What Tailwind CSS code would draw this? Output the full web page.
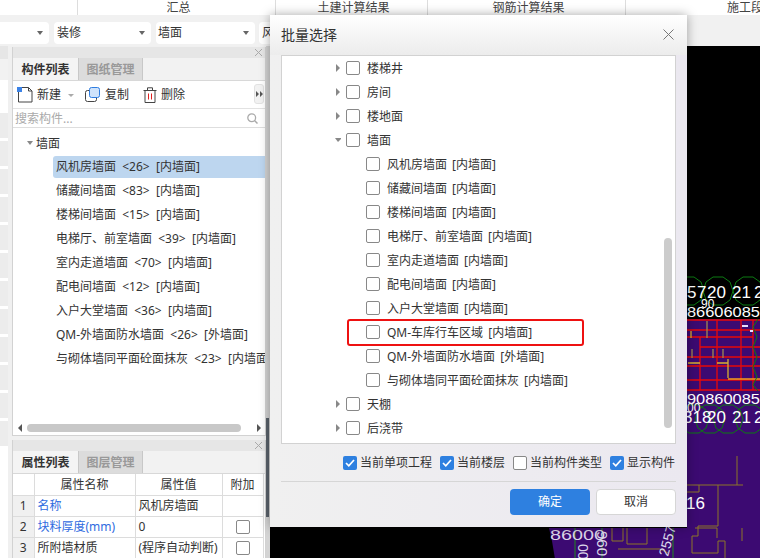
<!DOCTYPE html>
<html lang="zh-CN">
<head>
  <meta charset="UTF-8" />
  <title>批量选择</title>
  <script src="https://cdn.jsdelivr.net/npm/@tailwindcss/browser@4"></script>
</head>
<body class="bg-[#f0f0f0]">
<div class="relative w-[760px] h-[558px] overflow-hidden flex flex-col bg-[#f0f0f0] text-[#333] text-[12px] font-['Noto_Sans','Noto_Sans_CJK_SC',sans-serif]">

  <!-- top column heads -->
  <div class="h-[15px] flex bg-white shrink-0 leading-[16px] text-[#444] overflow-hidden">
    <div class="w-[78px] shrink-0 border-r border-[#ddd]"></div>
    <div class="w-[198px] shrink-0 border-r border-[#ddd] text-center pl-[4px]">汇总</div>
    <div class="w-[152px] shrink-0 border-r border-[#ddd] text-center pl-[4px]">土建计算结果</div>
    <div class="w-[198px] shrink-0 border-r border-[#ddd] text-center pl-[4px]">钢筋计算结果</div>
    <div class="pl-[101px] whitespace-nowrap">施工段</div>
  </div>

  <!-- combo row -->
  <div class="h-[31px] shrink-0 flex items-center gap-[4px] bg-[#f1f1f1] pt-[4px] -ml-[60px]">
    <div class="w-[109px] h-[22px] bg-white rounded-[4px] flex items-center justify-end pr-[6px] mr-[1px]"><span class="border-x-[3px] border-t-[4px] border-x-transparent border-t-[#666]"></span></div>
    <div class="w-[97px] h-[22px] bg-white rounded-[4px] flex items-center justify-between pl-[3px] pr-[4px] mr-[1px] text-[#333]">装修<span class="mr-[2px] border-x-[3px] border-t-[4px] border-x-transparent border-t-[#666]"></span></div>
    <div class="w-[99px] h-[22px] bg-white rounded-[4px] flex items-center justify-between pl-[2px] pr-[4px] text-[#333]">墙面<span class="mr-[2px] border-x-[3px] border-t-[4px] border-x-transparent border-t-[#666]"></span></div>
    <div class="w-[60px] h-[22px] bg-white rounded-[4px] flex items-center px-[3px] text-[#333]">风</div>
  </div>

  <div class="flex flex-1 min-h-0">
    <!-- cut-off panel on the far left -->
    <div class="w-[8px] shrink-0 flex flex-col bg-white overflow-hidden">
      <div class="h-[13px] bg-[#e6e6e6] shrink-0"></div>
      <div class="h-[21px] bg-[#f2f2f2] shrink-0"></div>
      <div class="h-[33px] shrink-0"></div>
      <div class="h-[25px] bg-[#ececec] mb-[3px] shrink-0"></div>
      <div class="h-[25px] bg-[#ececec] mb-[3px] shrink-0"></div>
      <div class="h-[25px] bg-[#ececec] mb-[3px] shrink-0"></div>
      <div class="h-[25px] bg-[#ececec] mb-[3px] shrink-0"></div>
      <div class="h-[25px] bg-[#ececec] mb-[3px] shrink-0"></div>
      <div class="h-[25px] bg-[#ececec] mb-[3px] shrink-0"></div>
      <div class="h-[25px] bg-[#ececec] mb-[3px] shrink-0"></div>
      <div class="h-[25px] bg-[#ececec] mb-[3px] shrink-0"></div>
      <div class="h-[25px] bg-[#ececec] mb-[3px] shrink-0"></div>
      <div class="h-[25px] bg-[#ececec] mb-[3px] shrink-0"></div>
      <div class="h-[25px] bg-[#ececec] mb-[3px] shrink-0"></div>
      <div class="h-[25px] bg-[#ececec] shrink-0"></div>
      <div class="h-[115px] bg-white shrink-0"></div>
      <div class="flex-1 bg-[#d3e5fa]"></div>
    </div>

    <!-- panels -->
    <div class="w-[254px] ml-[4px] shrink-0 flex flex-col">
      <!-- component list -->
      <div class="h-[389px] mt-[1px] shrink-0 flex flex-col border border-[#d2d2d2] border-t-0 bg-white">
        <div class="h-[11px] shrink-0 bg-[#e6e6e6] flex items-center justify-end pr-[3px] text-[#aaa]">
          <svg width="7" height="7" viewBox="0 0 7 7"><path d="M0 0L7 7M7 0L0 7" stroke="#aaa" fill="none"/></svg>
        </div>
        <div class="h-[23px] shrink-0 flex bg-[#f2f2f2] border-b border-[#d8d8d8]">
          <div class="w-[65px] pt-[2px] font-bold text-[#333] flex items-center justify-center bg-[#f4f4f4]">构件列表</div>
          <div class="w-[65px] pt-[2px] text-[#999] font-bold flex items-center justify-center bg-[#dcdcdc] border-x border-[#c8c8c8]">图纸管理</div>
        </div>
        <div class="h-[28px] shrink-0 flex items-center border-b border-[#e2e2e2] pl-[4px] pt-[1px] relative">
          <svg width="16" height="16" viewBox="0 0 16 16" class="mr-[4px]"><path d="M1.5 3.5V15H15V4L11.5 .5H5" fill="none" stroke="#444"/><path d="M11.5 .5V4H15" fill="none" stroke="#444"/><rect x="0" y="0" width="5" height="5" fill="#3b82e6"/></svg>
          <span>新建</span>
          <span class="ml-[7px] border-x-[3px] border-t-[3px] border-x-transparent border-t-[#aaa]"></span>
          <svg width="16" height="16" viewBox="0 0 16 16" class="ml-[11px] mr-[4px]"><rect x=".5" y="3.5" width="11" height="11" rx="2" fill="#fff" stroke="#444"/><rect x="4.5" y=".5" width="10" height="10" rx="2" fill="#cfe3fb" stroke="#2f7de0"/></svg>
          <span>复制</span>
          <svg width="14" height="16" viewBox="0 0 14 16" class="ml-[14px] mr-[4px]"><path d="M.5 3.5H13.5M4.5 3V.8H9.5V3M2 3.5V15.5H12V3.5" fill="none" stroke="#444"/><path d="M5.5 6.5V12.5M8.5 6.5V12.5" stroke="#e02020" fill="none"/></svg>
          <span>删除</span>
          <div class="absolute right-[1px] top-[3px] w-[10px] h-[20px] bg-[#f2f2f2] rounded-[3px] border border-[#e2e2e2] flex items-center justify-center">
            <svg width="7" height="6" viewBox="0 0 7 6"><path d="M0 0L3 3L0 6ZM4 0L7 3L4 6Z" fill="#555"/></svg>
          </div>
        </div>
        <div class="h-[19px] shrink-0 flex items-center justify-between border-b border-[#dedede] pl-[2px] pr-[7px] pt-[1px] text-[#aaa]">
          <span>搜索构件...</span>
          <svg width="11" height="11" viewBox="0 0 11 11"><circle cx="4.7" cy="4.7" r="3.9" fill="none" stroke="#aaa" stroke-width="1.3"/><path d="M7.5 7.5L10.5 10.5" stroke="#aaa" stroke-width="1.5"/></svg>
        </div>
        <div class="flex-1 min-h-0 pt-[3px] overflow-hidden whitespace-nowrap">
          <div class="h-[24px] flex items-center pl-[14px]"><span class="mr-[3px] border-x-[3px] border-t-[4px] border-x-transparent border-t-[#888]"></span><span class="pt-[2px]">墙面</span></div>
          <div class="h-[22px] my-px ml-[40px] pl-[3px] flex items-center bg-[#bdd6ef] rounded-l-[3px]">风机房墙面&nbsp;&nbsp;&lt;26&gt;&nbsp;&nbsp;[内墙面]</div>
          <div class="h-[24px] ml-[40px] pl-[3px] flex items-center">储藏间墙面&nbsp;&nbsp;&lt;83&gt;&nbsp;&nbsp;[内墙面]</div>
          <div class="h-[24px] ml-[40px] pl-[3px] flex items-center">楼梯间墙面&nbsp;&nbsp;&lt;15&gt;&nbsp;&nbsp;[内墙面]</div>
          <div class="h-[24px] ml-[40px] pl-[3px] flex items-center">电梯厅、前室墙面&nbsp;&nbsp;&lt;39&gt;&nbsp;&nbsp;[内墙面]</div>
          <div class="h-[24px] ml-[40px] pl-[3px] flex items-center">室内走道墙面&nbsp;&nbsp;&lt;70&gt;&nbsp;&nbsp;[内墙面]</div>
          <div class="h-[24px] ml-[40px] pl-[3px] flex items-center">配电间墙面&nbsp;&nbsp;&lt;12&gt;&nbsp;&nbsp;[内墙面]</div>
          <div class="h-[24px] ml-[40px] pl-[3px] flex items-center">入户大堂墙面&nbsp;&nbsp;&lt;36&gt;&nbsp;&nbsp;[内墙面]</div>
          <div class="h-[24px] ml-[40px] pl-[3px] flex items-center">QM-外墙面防水墙面&nbsp;&nbsp;&lt;26&gt;&nbsp;&nbsp;[外墙面]</div>
          <div class="h-[24px] ml-[40px] pl-[3px] flex items-center overflow-hidden">与砌体墙同平面砼面抹灰&nbsp;&nbsp;&lt;23&gt;&nbsp;&nbsp;[内墙面]</div>
        </div>
        <div class="h-[14px] shrink-0 flex items-center pl-[5px] pr-[4px] gap-[5px]">
          <svg width="4" height="8" viewBox="0 0 4 8"><path d="M4 0V8L0 4Z" fill="#555"/></svg>
          <div class="flex-1 h-[8px] bg-[#c8c8c8] rounded-full mr-[11px]"></div>
          <svg width="4" height="8" viewBox="0 0 4 8"><path d="M0 0V8L4 4Z" fill="#555"/></svg>
        </div>
      </div>

      <!-- property list -->
      <div class="flex-1 mt-[4px] min-h-0 flex flex-col border-x border-[#d2d2d2] bg-white overflow-hidden">
        <div class="h-[11px] shrink-0 bg-[#e6e6e6] flex items-center justify-end pr-[3px]">
          <svg width="7" height="7" viewBox="0 0 7 7"><path d="M0 0L7 7M7 0L0 7" stroke="#aaa" fill="none"/></svg>
        </div>
        <div class="h-[23px] shrink-0 flex bg-[#f2f2f2] border-b border-[#d8d8d8]">
          <div class="w-[65px] pt-[2px] font-bold flex items-center justify-center bg-[#f4f4f4]">属性列表</div>
          <div class="w-[65px] pt-[2px] text-[#999] font-bold flex items-center justify-center bg-[#dcdcdc] border-x border-[#c8c8c8]">图层管理</div>
        </div>
        <table class="w-[250px] table-fixed border-collapse">
          <colgroup><col class="w-[21px]"><col class="w-[101px]"><col class="w-[87px]"><col class="w-[41px]"></colgroup>
          <tr class="h-[21px]">
            <td class="border border-[#dcdcdc] border-l-0 border-t-0"></td>
            <td class="border border-[#dcdcdc] border-t-0 pt-[2px] text-center">属性名称</td>
            <td class="border border-[#dcdcdc] border-t-0 pt-[2px] text-center">属性值</td>
            <td class="border border-[#dcdcdc] border-t-0 pt-[2px] text-center">附加</td>
          </tr>
          <tr class="h-[21px]">
            <td class="border border-[#dcdcdc] border-l-0 bg-[#f0f0f0] text-center">1</td>
            <td class="border border-[#dcdcdc] pl-[3px] text-[#2f6be0]">名称</td>
            <td class="border border-[#dcdcdc] pl-[3px]">风机房墙面</td>
            <td class="border border-[#dcdcdc]"></td>
          </tr>
          <tr class="h-[21px]">
            <td class="border border-[#dcdcdc] border-l-0 bg-[#f0f0f0] text-center">2</td>
            <td class="border border-[#dcdcdc] pl-[3px] text-[#2f6be0]">块料厚度(mm)</td>
            <td class="border border-[#dcdcdc] pl-[3px]">0</td>
            <td class="border border-[#dcdcdc]"><div class="w-[14px] h-[14px] mx-auto bg-white border border-[#888] rounded-[2px]"></div></td>
          </tr>
          <tr class="h-[21px]">
            <td class="border border-[#dcdcdc] border-l-0 bg-[#f0f0f0] text-center">3</td>
            <td class="border border-[#dcdcdc] pl-[3px]">所附墙材质</td>
            <td class="border border-[#dcdcdc] pl-[3px] whitespace-nowrap overflow-hidden">(程序自动判断)</td>
            <td class="border border-[#dcdcdc]"><div class="w-[14px] h-[14px] mx-auto bg-white border border-[#888] rounded-[2px]"></div></td>
          </tr>
        </table>
      </div>
    </div>

    <!-- splitter -->
    <div class="w-[4px] shrink-0 flex flex-col bg-[#d4d4d4]">
      <div class="h-[372px] shrink-0"></div>
      <div class="h-[99px] w-[3px] shrink-0 bg-[#5a626b]"></div>
    </div>

    <!-- drawing canvas -->
    <svg class="flex-1 block bg-black" width="490" height="513" viewBox="270 45 490 513" font-family="Liberation Sans, sans-serif">
      <defs>
        <polygon id="axis" points="15,0 12,-9 5,-14 -5,-14 -12,-9 -15,0 -12,9 -5,14 5,14 12,9" fill="none" stroke="#0c7a12"/>
      </defs>
      <!-- purple floor -->
      <path d="M687 318H760V558H555L552 540L549 527H687Z" fill="#3c0a72"/>
      <!-- axis markers -->
      <use href="#axis" x="689" y="290"/><use href="#axis" x="718" y="290"/><use href="#axis" x="748" y="290"/>
      <use href="#axis" x="694" y="418"/><use href="#axis" x="710" y="418"/><use href="#axis" x="728" y="418"/><use href="#axis" x="750" y="418"/>
      <!-- red grid -->
      <g stroke="#e80808" fill="none" stroke-width="1.3">
        <path d="M687 319H760M687 329H760M687 336H753M700 346H760M687 356H760M687 365H760M687 379H760M687 389H760"/>
        <path d="M700 336V389M717 319V389M741 319V389M753 319V389"/>
      </g>
      <g stroke="#d8b030" fill="none" stroke-width="1.3">
        <path d="M691 330V337M688 362H700M717 362H728M728 358V377"/>
      </g>
      <path d="M707 320V337M692 348V357M713 348V357M723 348V357" stroke="#a08850" stroke-width="1.3" fill="none"/>
      <path d="M728 378H760" stroke="#f0a020" stroke-width="1.5" fill="none"/>
      <path d="M742 325H748M750 330H753" stroke="#e8e0ff" stroke-width="2"/>
      <path d="M758 318L753 326L757 336L753 346L757 356L753 366L757 376L753 384L758 390" fill="none" stroke="#0c7a12"/>
      <!-- dimension text -->
      <g fill="#fff" font-size="17">
        <text y="297"><tspan x="687">5</tspan><tspan x="697">7</tspan><tspan x="707">20</tspan><tspan x="732">21</tspan><tspan x="754">2</tspan></text>
        <text y="422"><tspan x="683">318</tspan><tspan x="707">20</tspan><tspan x="732">21</tspan><tspan x="754">2</tspan></text>
        <text x="686" y="508">16</text>
      </g>
      <g fill="#fff" font-size="15">
        <text x="687" y="316" textLength="73" lengthAdjust="spacingAndGlyphs">86606085</text>
        <text x="701" y="307" font-size="12">90</text>
        <text x="687" y="403" textLength="73" lengthAdjust="spacingAndGlyphs">90860085</text>
        <text x="687" y="411" font-size="12">00</text>
      </g>
      <!-- floor plan outlines -->
      <g stroke="#8c7428" fill="none">
        <path d="M687 484H737V455M699 484V491H687M718 484V525H698V535H692V552H718V540H725V558"/>
        <path d="M737 484H743M742 527V540"/>
        <path d="M612 527V540H623V527M627 527V543H647V527M618 548H660L668 552M695 527H717V537"/>
      </g>
      <path d="M575 527V558M602 527V558M673 527V558" stroke="#1f8a1f"/>
      <g fill="#ddd6ea" font-size="14">
        <text x="550" y="539" font-size="15" textLength="55" lengthAdjust="spacingAndGlyphs">86000</text>
        <text transform="translate(578 543) rotate(90)">00</text>
        <text transform="translate(597 530) rotate(90)" font-size="15">960</text>
        <text transform="translate(668 556) rotate(-75)">2557</text>
      </g>
    </svg>
  </div>

  <!-- modal dialog -->
  <div class="absolute left-[270px] top-[15px] w-[417px] h-[512px] flex flex-col bg-gradient-to-r from-[#f0f0f0] to-[#ebe8f0] shadow-[0_0_10px_rgba(0,0,0,0.35)]">
    <div class="h-[40px] shrink-0 flex items-center justify-between pl-[11px] pr-[13px] pb-[1px] bg-gradient-to-b from-white to-[#ececec] text-[14px] text-[#333]">
      <span>批量选择</span>
      <svg width="11" height="11" viewBox="0 0 11 11"><path d="M.5 .5L10.5 10.5M10.5 .5L.5 10.5" stroke="#777" fill="none"/></svg>
    </div>
    <div class="relative h-[389px] mx-[11px] shrink-0 bg-white border border-[#d2d2d2] overflow-hidden whitespace-nowrap [word-spacing:2px]">
      <div class="h-[24px] flex items-center pl-[53px]"><svg width="6" height="8" viewBox="0 0 6 8" class="mr-[5px]"><path d="M1 0L5 4L1 8Z" fill="#888"/></svg><span class="w-[14px] h-[14px] bg-white border border-[#888] rounded-[2px] mr-[7px]"></span><span class="pt-[2px]">楼梯井</span></div>
      <div class="h-[24px] flex items-center pl-[53px]"><svg width="6" height="8" viewBox="0 0 6 8" class="mr-[5px]"><path d="M1 0L5 4L1 8Z" fill="#888"/></svg><span class="w-[14px] h-[14px] bg-white border border-[#888] rounded-[2px] mr-[7px]"></span><span class="pt-[2px]">房间</span></div>
      <div class="h-[24px] flex items-center pl-[53px]"><svg width="6" height="8" viewBox="0 0 6 8" class="mr-[5px]"><path d="M1 0L5 4L1 8Z" fill="#888"/></svg><span class="w-[14px] h-[14px] bg-white border border-[#888] rounded-[2px] mr-[7px]"></span><span class="pt-[2px]">楼地面</span></div>
      <div class="h-[24px] flex items-center pl-[53px]"><svg width="6" height="8" viewBox="0 0 6 8" class="mr-[5px]"><path d="M0 2H7L3 6Z" fill="#888"/></svg><span class="w-[14px] h-[14px] bg-white border border-[#888] rounded-[2px] mr-[7px]"></span><span class="pt-[2px]">墙面</span></div>
      <div class="h-[24px] flex items-center pl-[84px]"><span class="w-[14px] h-[14px] bg-white border border-[#888] rounded-[2px] mr-[7px]"></span><span class="pt-[2px]">风机房墙面 [内墙面]</span></div>
      <div class="h-[24px] flex items-center pl-[84px]"><span class="w-[14px] h-[14px] bg-white border border-[#888] rounded-[2px] mr-[7px]"></span><span class="pt-[2px]">储藏间墙面 [内墙面]</span></div>
      <div class="h-[24px] flex items-center pl-[84px]"><span class="w-[14px] h-[14px] bg-white border border-[#888] rounded-[2px] mr-[7px]"></span><span class="pt-[2px]">楼梯间墙面 [内墙面]</span></div>
      <div class="h-[24px] flex items-center pl-[84px]"><span class="w-[14px] h-[14px] bg-white border border-[#888] rounded-[2px] mr-[7px]"></span><span class="pt-[2px]">电梯厅、前室墙面 [内墙面]</span></div>
      <div class="h-[24px] flex items-center pl-[84px]"><span class="w-[14px] h-[14px] bg-white border border-[#888] rounded-[2px] mr-[7px]"></span><span class="pt-[2px]">室内走道墙面 [内墙面]</span></div>
      <div class="h-[24px] flex items-center pl-[84px]"><span class="w-[14px] h-[14px] bg-white border border-[#888] rounded-[2px] mr-[7px]"></span><span class="pt-[2px]">配电间墙面 [内墙面]</span></div>
      <div class="h-[24px] flex items-center pl-[84px]"><span class="w-[14px] h-[14px] bg-white border border-[#888] rounded-[2px] mr-[7px]"></span><span class="pt-[2px]">入户大堂墙面 [内墙面]</span></div>
      <div class="h-[24px] flex items-center pl-[84px]"><span class="w-[14px] h-[14px] bg-white border border-[#888] rounded-[2px] mr-[7px]"></span><span class="pt-[2px]">QM-车库行车区域 [内墙面]</span></div>
      <div class="h-[24px] flex items-center pl-[84px]"><span class="w-[14px] h-[14px] bg-white border border-[#888] rounded-[2px] mr-[7px]"></span><span class="pt-[2px]">QM-外墙面防水墙面 [外墙面]</span></div>
      <div class="h-[24px] flex items-center pl-[84px]"><span class="w-[14px] h-[14px] bg-white border border-[#888] rounded-[2px] mr-[7px]"></span><span class="pt-[2px]">与砌体墙同平面砼面抹灰 [内墙面]</span></div>
      <div class="h-[24px] flex items-center pl-[53px]"><svg width="6" height="8" viewBox="0 0 6 8" class="mr-[5px]"><path d="M1 0L5 4L1 8Z" fill="#888"/></svg><span class="w-[14px] h-[14px] bg-white border border-[#888] rounded-[2px] mr-[7px]"></span><span class="pt-[2px]">天棚</span></div>
      <div class="h-[24px] flex items-center pl-[53px]"><svg width="6" height="8" viewBox="0 0 6 8" class="mr-[5px]"><path d="M1 0L5 4L1 8Z" fill="#888"/></svg><span class="w-[14px] h-[14px] bg-white border border-[#888] rounded-[2px] mr-[7px]"></span><span class="pt-[2px]">后浇带</span></div>
      <!-- scrollbar thumb -->
      <div class="absolute right-[3px] top-[182px] w-[8px] h-[190px] bg-[#cccccc] rounded-full"></div>
      <!-- red annotation -->
      <div class="absolute left-[65px] top-[263px] w-[237px] h-[27px] border-2 border-[#ee1111] rounded-[3px]"></div>
    </div>
    <div class="h-[38px] shrink-0 mx-[11px] flex items-center justify-end border-b border-[#d6d6d6] pt-[1px]">
      <span class="w-[14px] h-[14px] bg-[#2e80e0] rounded-[2px] mr-[3px] flex items-center justify-center"><svg width="10" height="8" viewBox="0 0 10 8"><path d="M1 4L3.8 6.8L9 1" stroke="#fff" stroke-width="1.7" fill="none"/></svg></span><span class="mr-[8px]">当前单项工程</span>
      <span class="w-[14px] h-[14px] bg-[#2e80e0] rounded-[2px] mr-[3px] flex items-center justify-center"><svg width="10" height="8" viewBox="0 0 10 8"><path d="M1 4L3.8 6.8L9 1" stroke="#fff" stroke-width="1.7" fill="none"/></svg></span><span class="mr-[8px]">当前楼层</span>
      <span class="w-[14px] h-[14px] bg-white border border-[#888] rounded-[2px] mr-[3px]"></span><span class="mr-[8px]">当前构件类型</span>
      <span class="w-[14px] h-[14px] bg-[#2e80e0] rounded-[2px] mr-[3px] flex items-center justify-center"><svg width="10" height="8" viewBox="0 0 10 8"><path d="M1 4L3.8 6.8L9 1" stroke="#fff" stroke-width="1.7" fill="none"/></svg></span><span class="mr-[1px]">显示构件</span>
    </div>
    <div class="flex justify-end gap-[6px] mx-[11px] mt-[7px]">
      <div class="w-[80px] h-[26px] rounded-[4px] bg-[#2e80e0] text-white flex items-center justify-center">确定</div>
      <div class="w-[80px] h-[26px] rounded-[4px] bg-white border border-[#d6d6d6] flex items-center justify-center">取消</div>
    </div>
  </div>
</div>
</body>
</html>
